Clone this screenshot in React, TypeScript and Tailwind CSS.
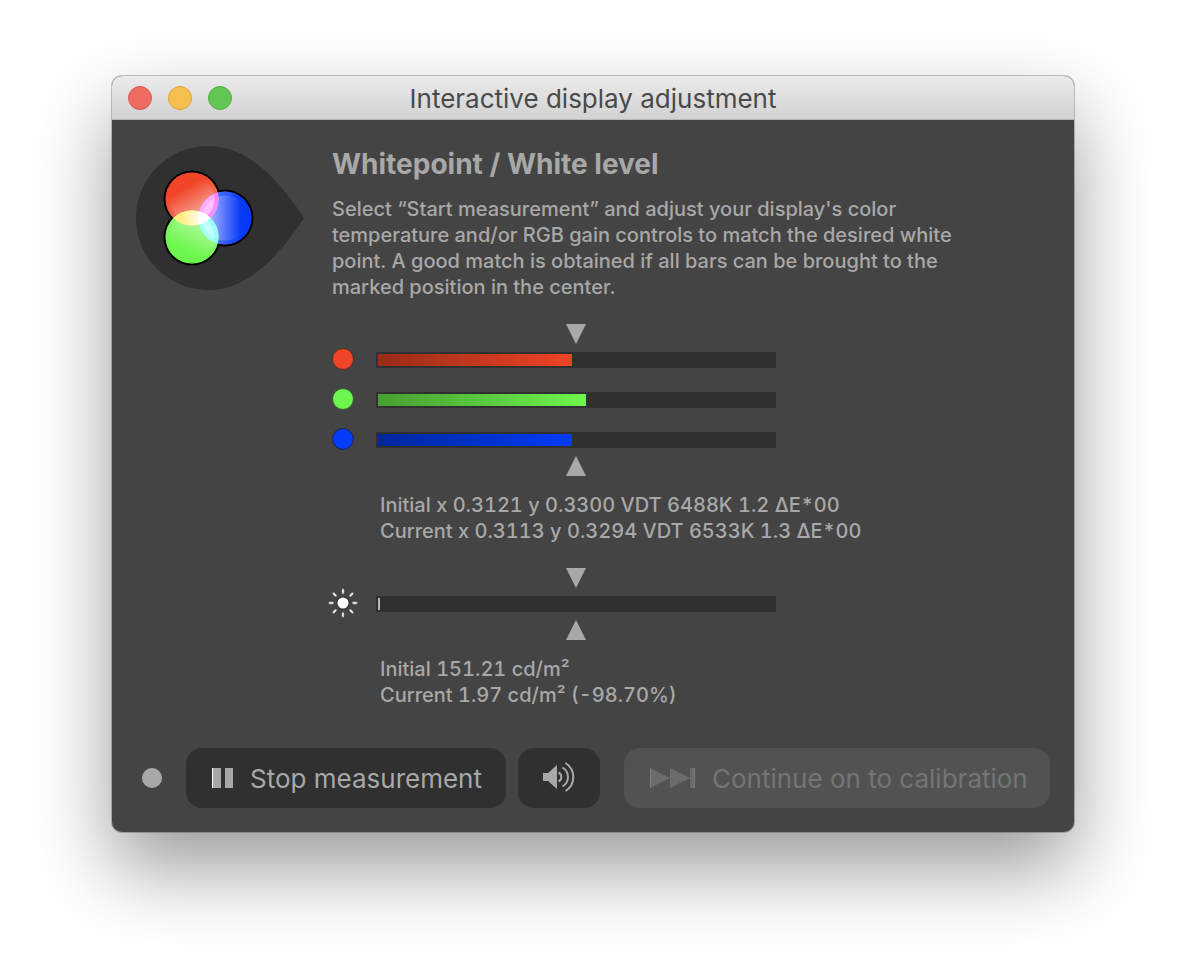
import React from "react";

type Channel = { name: string; fill: string; dot: string; ring: string; percent: number };

const channels: Channel[] = [
  { name: "Red", fill: "from-[#992b17] to-[#f04527]", dot: "#f04527", ring: "#5a2c22", percent: 48.7 },
  { name: "Green", fill: "from-[#479e31] to-[#6df64d]", dot: "#6df64d", ring: "#3a5a30", percent: 52.3 },
  { name: "Blue", fill: "from-[#00279c] to-[#063bf8]", dot: "#063bf8", ring: "#1c2748", percent: 48.7 },
];

function Marker({ up = false }: { up?: boolean }) {
  return (
    <div className="flex max-w-[444px] justify-center pl-11">
      <svg className="block h-5 w-5" viewBox="0 0 20 20" aria-hidden="true">
        <path d={up ? "M0 20L10 0L20 20Z" : "M0 0H20L10 20Z"} fill="#a8a8a8" />
      </svg>
    </div>
  );
}

function Meter({ label, fill, percent }: { label: string; fill: string; percent: number }) {
  return (
    <div
      role="meter"
      aria-label={label}
      aria-valuenow={percent}
      aria-valuemin={0}
      aria-valuemax={100}
      className="h-4 max-w-[400px] flex-1 self-center bg-[#303030] py-0.5 pl-0.5"
    >
      <div className={`h-3 bg-linear-to-r ${fill}`} style={{ width: `${percent}%` }} />
    </div>
  );
}

function Sun() {
  return (
    <svg className="block h-[22px] w-[22px] overflow-visible" viewBox="0 0 22 22" aria-hidden="true">
      <circle cx="11" cy="11" r="7" fill="#303030" opacity=".5" />
      <circle cx="11" cy="11" r="5.5" fill="#fff" />
      {[0, 45, 90, 135, 180, 225, 270, 315].map((angle) => (
        <ellipse
          key={angle}
          cx="11"
          cy="-0.8"
          rx="1.4"
          ry="3"
          fill="#eee"
          stroke="#303030"
          strokeOpacity=".5"
          transform={`rotate(${angle} 11 11)`}
        />
      ))}
    </svg>
  );
}

function Badge() {
  return (
    <svg className="block h-36 w-[168px] shrink-0" viewBox="0 0 168 144" aria-hidden="true">
      <defs>
        <linearGradient id="r" x1="0.3" y1="0.1" x2="0.8" y2="0.95">
          <stop offset="0.2" stopColor="#f04527" />
          <stop offset="1" stopColor="#fbc8c0" />
        </linearGradient>
        <linearGradient id="g" x1="0.3" y1="0.95" x2="0.75" y2="0.05">
          <stop offset="0.2" stopColor="#6df64d" />
          <stop offset="1" stopColor="#c5fbb8" />
        </linearGradient>
        <linearGradient id="b" x1="1" y1="0.5" x2="0" y2="0.5">
          <stop offset="0.2" stopColor="#063bf8" />
          <stop offset="0.85" stopColor="#b5bcff" />
        </linearGradient>
        <radialGradient id="core" gradientUnits="userSpaceOnUse" cx="67" cy="72" r="22">
          <stop offset="0" stopColor="#fff" />
          <stop offset="1" stopColor="#fff" stopOpacity="0" />
        </radialGradient>
        <clipPath id="cr"><circle cx="56" cy="53" r="26.5" /></clipPath>
        <clipPath id="cg"><circle cx="56" cy="91" r="26.5" /></clipPath>
        <clipPath id="cb"><circle cx="89" cy="72" r="26.5" /></clipPath>
      </defs>
      <path d="M72 0C110 0 140 30 168 72C140 114 110 144 72 144A72 72 0 0 1 72 0Z" fill="#303030" />
      <g fill="#000">
        <circle cx="56" cy="53" r="28.5" />
        <circle cx="56" cy="91" r="28.5" />
        <circle cx="89" cy="72" r="28.5" />
      </g>
      <circle cx="56" cy="53" r="26.5" fill="url(#r)" />
      <circle cx="56" cy="53" r="24.5" fill="none" stroke="#f04527" strokeOpacity=".4" strokeWidth="4" />
      <circle cx="89" cy="72" r="26.5" fill="url(#b)" />
      <circle cx="89" cy="72" r="24.5" fill="none" stroke="#063bf8" strokeOpacity=".4" strokeWidth="4" />
      <circle cx="56" cy="91" r="26.5" fill="url(#g)" />
      <circle cx="56" cy="91" r="24.5" fill="none" stroke="#6df64d" strokeOpacity=".4" strokeWidth="4" />
      <g clipPath="url(#cr)">
        <circle cx="89" cy="72" r="26.5" fill="#ffc4ff" />
        <circle cx="56" cy="91" r="26.5" fill="#ffef80" />
        <g clipPath="url(#cb)">
          <circle cx="89" cy="72" r="24.5" fill="none" stroke="#ff80ff" strokeOpacity=".35" strokeWidth="4" />
          <circle cx="56" cy="53" r="24.5" fill="none" stroke="#ff50ff" strokeOpacity=".5" strokeWidth="4" />
        </g>
      </g>
      <g clipPath="url(#cg)">
        <circle cx="89" cy="72" r="26.5" fill="#c4ffff" />
        <g clipPath="url(#cb)">
          <circle cx="56" cy="91" r="24.5" fill="none" stroke="#50ffff" strokeOpacity=".4" strokeWidth="4" />
          <circle cx="89" cy="72" r="24.5" fill="none" stroke="#70ffe8" strokeOpacity=".35" strokeWidth="4" />
        </g>
        <g clipPath="url(#cr)">
          <circle cx="56" cy="91" r="26.5" fill="#ffef80" />
          <circle cx="56" cy="72" r="26.5" fill="url(#core)" />
          <circle cx="89" cy="72" r="26.5" fill="#fff" />
        </g>
      </g>
    </svg>
  );
}

export default function App() {
  return (
    <div className="min-h-screen overflow-hidden bg-white px-28 pt-[76px] pb-36 font-[Inter,'Liberation_Sans',sans-serif] text-[#a8a8a8]">
      <main className="overflow-hidden rounded-[10px] bg-[#444444] shadow-[0_0_0_1px_rgba(0,0,0,0.22),0_36px_80px_rgba(0,0,0,0.4)]">
        <header className="grid h-11 grid-cols-[1fr_auto_1fr] items-center border-b border-[#b8b8b8] bg-linear-to-b from-[#ebebeb] to-[#d2d2d2] px-4">
          <div className="flex gap-4">
            <button aria-label="Close" className="h-6 w-6 rounded-full border border-[#d9584d] bg-[#ed6b60]" />
            <button aria-label="Minimize" className="h-6 w-6 rounded-full border border-[#dba33c] bg-[#f5c04f]" />
            <button aria-label="Zoom" className="h-6 w-6 rounded-full border border-[#4fae42] bg-[#62c655]" />
          </div>
          <h1 className="pt-0.5 text-[26px] leading-8 text-[#4a4a4a]">Interactive display adjustment</h1>
        </header>

        <section className="flex gap-7 px-6 pt-[26px]">
          <Badge />
          <div className="min-w-0 flex-1 pt-0.5 text-[20px] leading-[26px] font-medium">
            <h2 className="text-[28px] leading-8 font-bold">Whitepoint / White level</h2>
            <p className="mt-4 max-w-[650px]">
              Select “Start measurement” and adjust your display's color temperature and/or RGB gain controls to match
              the desired white point. A good match is obtained if all bars can be brought to the marked position in the
              center.
            </p>

            <div className="mt-6">
              <Marker />
              <div className="my-1 flex flex-col gap-4">
                {channels.map((c) => (
                  <div key={c.name} className="flex h-6 items-start gap-[22px]">
                    <svg className="block h-[22px] w-[22px]" viewBox="0 0 22 22" aria-hidden="true">
                      <circle cx="11" cy="11" r="10.5" fill={c.dot} stroke={c.ring} />
                    </svg>
                    <Meter label={c.name} fill={c.fill} percent={c.percent} />
                  </div>
                ))}
              </div>
              <Marker up />
            </div>
            <p className="mt-4 pl-12 tabular-nums">
              Initial x 0.3121 y 0.3300 VDT 6488K 1.2 ΔE*00
              <br />
              Current x 0.3113 y 0.3294 VDT 6533K 1.3 ΔE*00
            </p>

            <div className="mt-6">
              <Marker />
              <div className="my-1 flex h-6 items-start gap-[22px]">
                <Sun />
                <Meter label="Luminance" fill="from-[#a8a8a8] to-[#c8c8c8]" percent={0.6} />
              </div>
              <Marker up />
            </div>
            <p className="mt-4 pl-12 tabular-nums">
              Initial 151.21 cd/m²
              <br />
              Current 1.97 cd/m² (-98.70%)
            </p>
          </div>
        </section>

        <footer className="flex items-center px-6 pt-10 pb-6 text-[26px]">
          <span className="ml-1.5 h-5 w-5 rounded-full bg-[#a8a8a8]" />
          <button className="ml-6 flex h-[60px] w-80 items-center rounded-2xl bg-[#303030] pl-[26px] whitespace-nowrap">
            <svg className="mr-4 block h-5 w-[22px]" viewBox="0 0 22 20" aria-hidden="true">
              <path d="M0 0H9V20H0ZM13 0H21V20H13Z" fill="#a8a8a8" />
              <path d="M0 0H1V20H0Z" fill="#fff" />
            </svg>
            Stop measurement
          </button>
          <button aria-label="Sound" className="ml-3 flex h-[60px] w-[82px] items-center justify-center rounded-2xl bg-[#303030]">
            <svg className="block h-8 w-8" viewBox="0 0 32 32" aria-hidden="true">
              <path d="M0 11H5L14 3V27L5 19H0Z" fill="#a8a8a8" />
              <g fill="none" stroke="#a8a8a8" strokeWidth="2">
                <path d="M15.5 10.5A5 5 0 0 1 15.5 19.5" />
                <path d="M19.5 5.5A11 11 0 0 1 19.5 24.5" />
                <path d="M22.5 1A16.500 16.500 0 0 1 22.5 29" />
              </g>
            </svg>
          </button>
          <button disabled className="ml-auto flex h-[60px] w-[426px] items-center rounded-2xl bg-[#525252] pl-[26px] whitespace-nowrap text-[#757575]">
            <svg className="mr-4 block h-5 w-[46px]" viewBox="0 0 46 20" aria-hidden="true">
              <path d="M0 0L20 10L0 20ZM20 0L40 10L20 20ZM40 0H45V20H40Z" fill="#6b6b6b" />
              <path d="M0 0H1V20H0ZM44 0H45V20H44Z" fill="#7c7c7c" />
            </svg>
            Continue on to calibration
          </button>
        </footer>
      </main>
    </div>
  );
}
